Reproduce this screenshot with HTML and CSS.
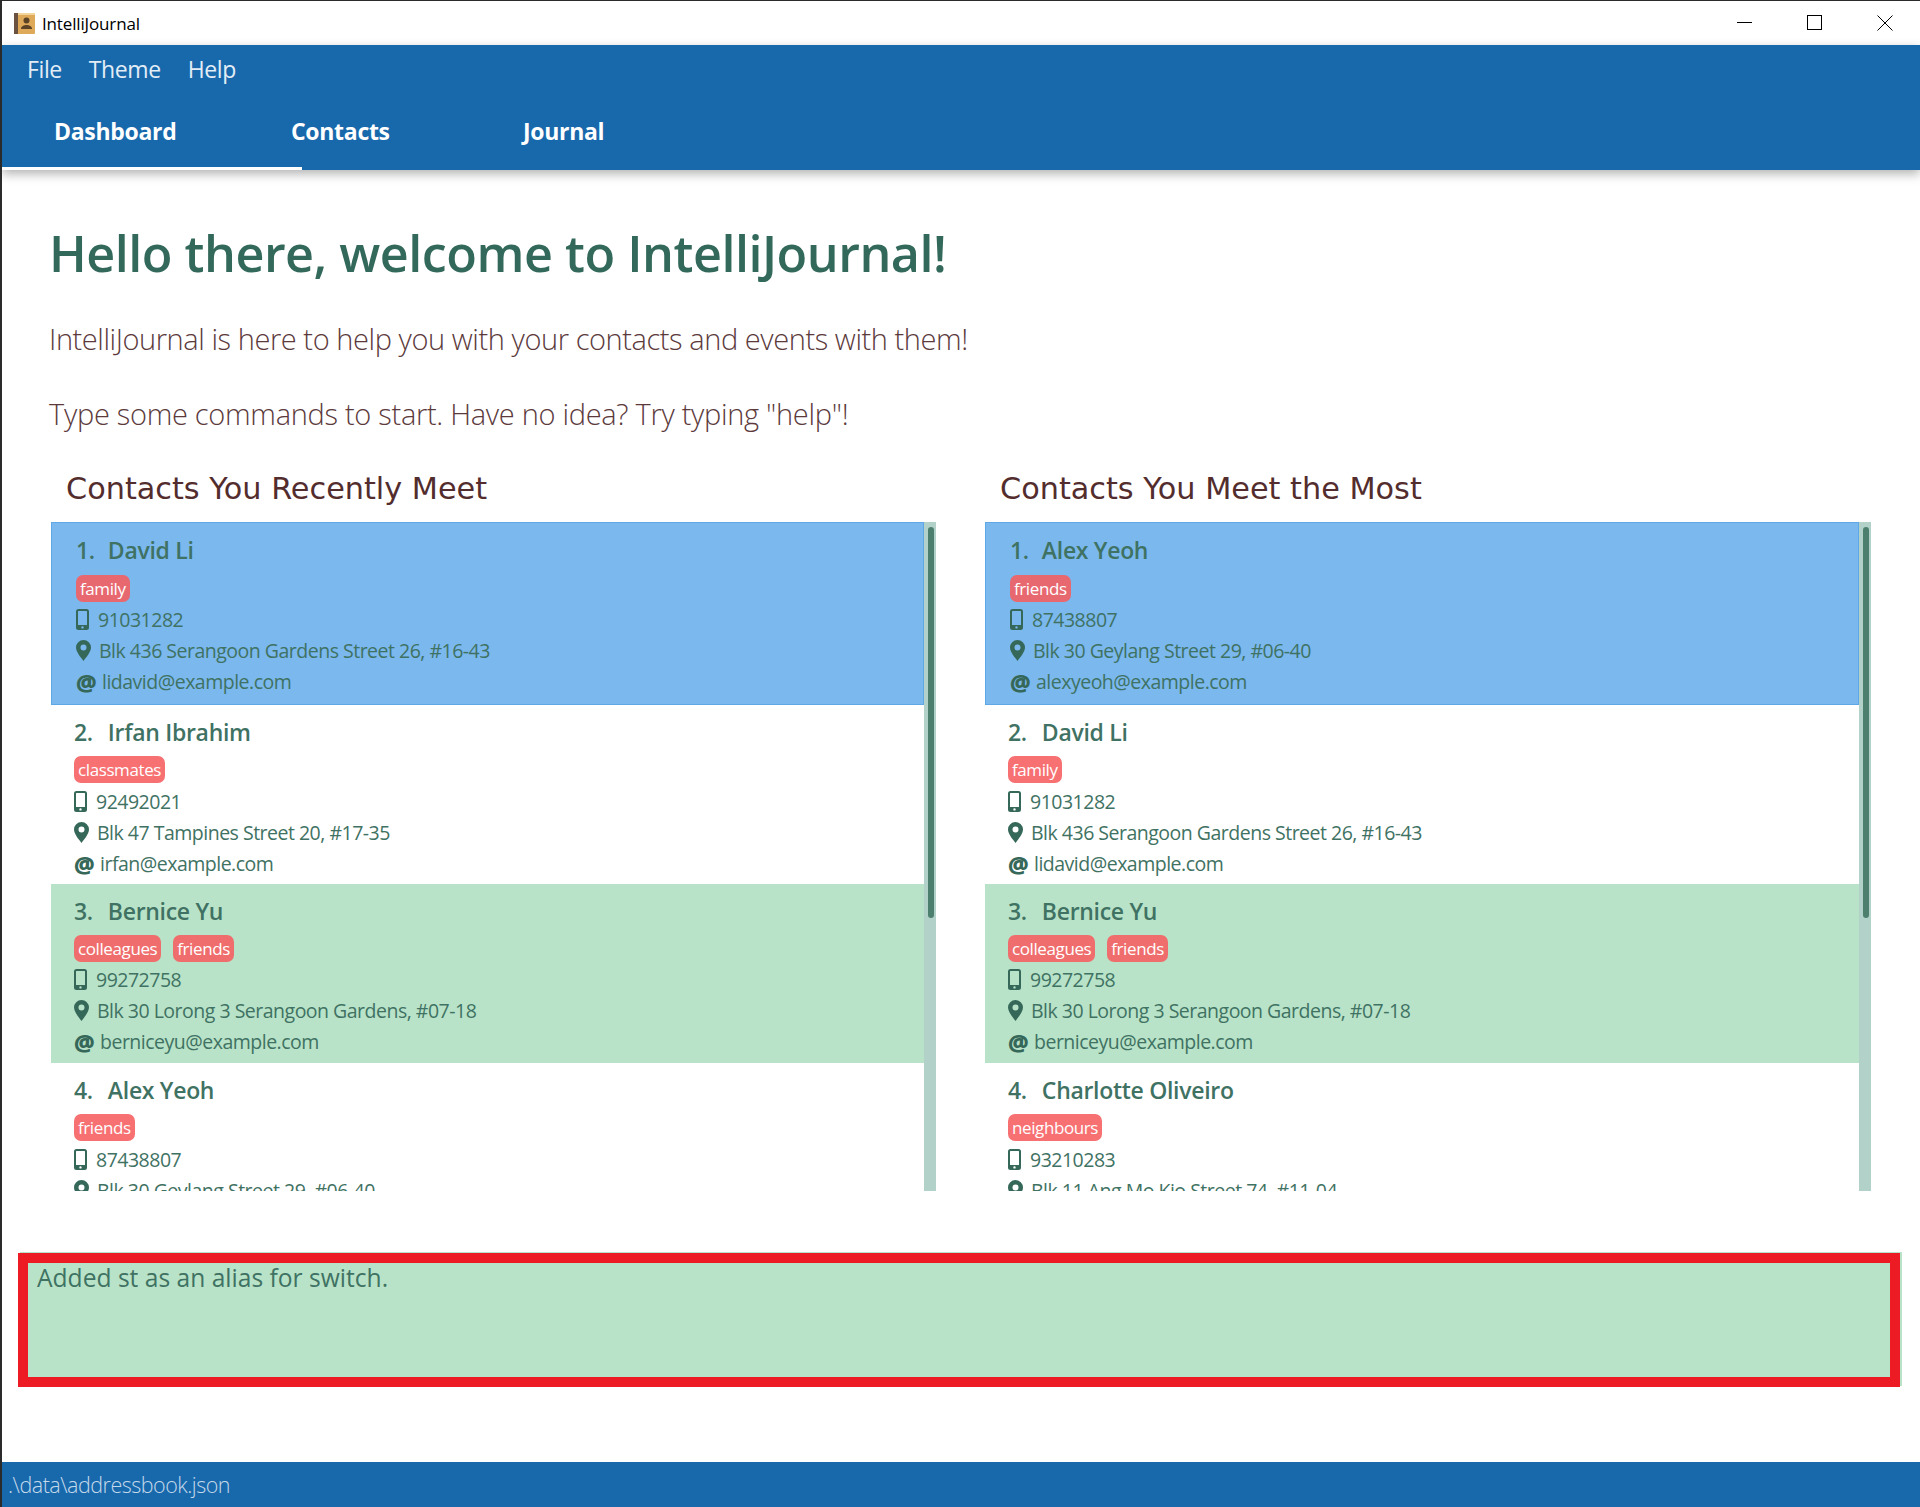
FILE: index.html
```html
<!DOCTYPE html>
<html lang="en">
<head>
  <meta charset="UTF-8" />
  <title>IntelliJournal</title>
  <link rel="stylesheet" href="styles.css">
</head>
<body>
  <svg class="icon-defs" width="0" height="0">
    <symbol id="phone" viewBox="0 0 13 21">
      <path fill-rule="evenodd" d="M2.500 0h8A2.500 2.500 0 0 1 13 2.500v16a2.500 2.500 0 0 1-2.500 2.500h-8A2.500 2.500 0 0 1 0 18.500v-16A2.500 2.500 0 0 1 2.500 0zM2 2.500v13.500h9V2.500a.5.5 0 0 0-.5-.5h-8a.5.5 0 0 0-.5.5zM6.500 17.200a1.200 1.200 0 1 0 0 2.400 1.200 1.200 0 0 0 0-2.400z"/>
    </symbol>
    <symbol id="pin" viewBox="0 0 15 21">
      <path fill-rule="evenodd" d="M7.500 0A7.500 7.500 0 0 0 0 7.500C0 12 5 17.500 7.500 21 10 17.500 15 12 15 7.500A7.500 7.500 0 0 0 7.500 0zm0 4.500a3 3 0 1 1 0 6 3 3 0 0 1 0-6z"/>
    </symbol>
  </svg>

  <header class="titlebar">
    <div class="app-name">
      <svg class="app-icon" width="21" height="21" viewBox="0 0 21 21">
        <rect x="0" y="0" width="21" height="21" rx="1" fill="#dfa95a"/>
        <rect x="0" y="0" width="4" height="21" fill="#6b5240"/>
        <rect x="4" y="0" width="17" height="2" fill="#f2d59a"/>
        <circle cx="12.500" cy="7.500" r="3" fill="#5c4326"/>
        <path d="M7 16c0-3 3-4 5.500-4s5.500 1 5.500 4z" fill="#5c4326"/>
      </svg>
      <span>IntelliJournal</span>
    </div>
    <div class="win-controls">
      <div class="win-btn">
        <svg width="16" height="16" viewBox="0 0 16 16"><path d="M0 7.500h15" stroke="#000" fill="none"/></svg>
      </div>
      <div class="win-btn">
        <svg width="16" height="16" viewBox="0 0 16 16"><rect x=".5" y=".5" width="14" height="14" stroke="#000" fill="none"/></svg>
      </div>
      <div class="win-btn">
        <svg width="16" height="16" viewBox="0 0 16 16"><path d="M.5.500l15 15M15.500.500l-15 15" stroke="#000" fill="none"/></svg>
      </div>
    </div>
  </header>

  <nav class="appbar">
    <div class="menu">
      <span>File</span>
      <span>Theme</span>
      <span>Help</span>
    </div>
    <div class="tabs">
      <div class="tab tab-dashboard active">Dashboard</div>
      <div class="tab tab-contacts">Contacts</div>
      <div class="tab">Journal</div>
    </div>
  </nav>

  <main class="content">
    <h1>Hello there, welcome to IntelliJournal!</h1>
    <p class="intro intro-first">IntelliJournal is here to help you with your contacts and events with them!</p>
    <p class="intro">Type some commands to start. Have no idea? Try typing "help"!</p>

    <div class="columns">
      <section>
        <h2>Contacts You Recently Meet</h2>
        <div class="list">
          <div class="cards">
            <article class="card selected">
              <div class="name"><span class="num">1.</span>David Li</div>
              <div class="tags"><span class="tag">family</span></div>
              <div class="row"><svg class="ico"><use href="#phone"/></svg>91031282</div>
              <div class="row"><svg class="ico ico-pin"><use href="#pin"/></svg>Blk 436 Serangoon Gardens Street 26, #16-43</div>
              <div class="row"><span class="at">@</span>lidavid@example.com</div>
            </article>
            <article class="card">
              <div class="name"><span class="num">2.</span>Irfan Ibrahim</div>
              <div class="tags"><span class="tag">classmates</span></div>
              <div class="row"><svg class="ico"><use href="#phone"/></svg>92492021</div>
              <div class="row"><svg class="ico ico-pin"><use href="#pin"/></svg>Blk 47 Tampines Street 20, #17-35</div>
              <div class="row"><span class="at">@</span>irfan@example.com</div>
            </article>
            <article class="card alt">
              <div class="name"><span class="num">3.</span>Bernice Yu</div>
              <div class="tags"><span class="tag">colleagues</span><span class="tag">friends</span></div>
              <div class="row"><svg class="ico"><use href="#phone"/></svg>99272758</div>
              <div class="row"><svg class="ico ico-pin"><use href="#pin"/></svg>Blk 30 Lorong 3 Serangoon Gardens, #07-18</div>
              <div class="row"><span class="at">@</span>berniceyu@example.com</div>
            </article>
            <article class="card">
              <div class="name"><span class="num">4.</span>Alex Yeoh</div>
              <div class="tags"><span class="tag">friends</span></div>
              <div class="row"><svg class="ico"><use href="#phone"/></svg>87438807</div>
              <div class="row"><svg class="ico ico-pin"><use href="#pin"/></svg>Blk 30 Geylang Street 29, #06-40</div>
            </article>
          </div>
          <div class="scrollbar"><div class="thumb"></div></div>
        </div>
      </section>

      <section>
        <h2>Contacts You Meet the Most</h2>
        <div class="list">
          <div class="cards">
            <article class="card selected">
              <div class="name"><span class="num">1.</span>Alex Yeoh</div>
              <div class="tags"><span class="tag">friends</span></div>
              <div class="row"><svg class="ico"><use href="#phone"/></svg>87438807</div>
              <div class="row"><svg class="ico ico-pin"><use href="#pin"/></svg>Blk 30 Geylang Street 29, #06-40</div>
              <div class="row"><span class="at">@</span>alexyeoh@example.com</div>
            </article>
            <article class="card">
              <div class="name"><span class="num">2.</span>David Li</div>
              <div class="tags"><span class="tag">family</span></div>
              <div class="row"><svg class="ico"><use href="#phone"/></svg>91031282</div>
              <div class="row"><svg class="ico ico-pin"><use href="#pin"/></svg>Blk 436 Serangoon Gardens Street 26, #16-43</div>
              <div class="row"><span class="at">@</span>lidavid@example.com</div>
            </article>
            <article class="card alt">
              <div class="name"><span class="num">3.</span>Bernice Yu</div>
              <div class="tags"><span class="tag">colleagues</span><span class="tag">friends</span></div>
              <div class="row"><svg class="ico"><use href="#phone"/></svg>99272758</div>
              <div class="row"><svg class="ico ico-pin"><use href="#pin"/></svg>Blk 30 Lorong 3 Serangoon Gardens, #07-18</div>
              <div class="row"><span class="at">@</span>berniceyu@example.com</div>
            </article>
            <article class="card">
              <div class="name"><span class="num">4.</span>Charlotte Oliveiro</div>
              <div class="tags"><span class="tag">neighbours</span></div>
              <div class="row"><svg class="ico"><use href="#phone"/></svg>93210283</div>
              <div class="row"><svg class="ico ico-pin"><use href="#pin"/></svg>Blk 11 Ang Mo Kio Street 74, #11-04</div>
            </article>
          </div>
          <div class="scrollbar"><div class="thumb"></div></div>
        </div>
      </section>
    </div>

    <div class="result">Added st as an alias for switch.</div>
  </main>

  <footer class="statusbar">.\data\addressbook.json</footer>
</body>
</html>
```

FILE: styles.css
```css
html, body {
  height: 100%;
}

body {
  margin: 0;
  display: flex;
  flex-direction: column;
  box-sizing: border-box;
  height: 1507px;
  overflow: hidden;
  border-left: 2px solid #2b2b2b;
  border-top: 1px solid #2b2b2b;
  background-color: #fff;
  font-family: 'Open Sans', sans-serif;
  color: #3f7263;
}

.icon-defs {
  position: absolute;
}

/* title bar */
.titlebar {
  height: 44px;
  flex: none;
  display: flex;
  justify-content: space-between;
  align-items: center;
  color: #000;
}

.app-name {
  display: flex;
  align-items: center;
  padding-left: 12px;
  font-size: 17px;
  letter-spacing: -0.15px;
}

.app-icon {
  margin-right: 7px;
}

.win-controls {
  display: flex;
}

.win-btn {
  width: 70px;
  height: 44px;
  display: flex;
  align-items: center;
  justify-content: center;
}

/* menu and tabs */
.appbar {
  height: 125px;
  flex: none;
  background-color: #1868ac;
  box-shadow: 0 4px 10px rgba(0,0,0,0.3);
  position: relative;
  color: #fff;
}

.menu {
  height: 48px;
  display: flex;
  align-items: center;
  gap: 27px;
  padding-left: 25px;
  font-size: 23px;
  letter-spacing: -0.4px;
  color: #e2edf6;
}

.tabs {
  display: flex;
  height: 77px;
  padding-top: 15px;
  box-sizing: border-box;
  font-size: 23px;
  font-weight: 700;
  letter-spacing: -0.3px;
}

.tab {
  position: relative;
  line-height: 46px;
}

.tab-dashboard {
  width: 237px;
  padding-left: 52px;
}

.tab-contacts {
  width: 232px;
}

.tab.active::after {
  content: '';
  position: absolute;
  left: 0;
  bottom: 0;
  width: 300px;
  height: 3px;
  background-color: #fff;
}

/* main area */
.content {
  flex: 1;
  min-height: 0;
  display: flex;
  flex-direction: column;
}

h1 {
  margin: 50px 0 0 47px;
  font-size: 50.300px;
  line-height: 66px;
  height: 81px;
  font-weight: 600;
  color: #33695a;
  letter-spacing: -0.5px;
}

.intro {
  margin: 0 0 0 47px;
  height: 75px;
  line-height: 75px;
  font-size: 29px;
  font-weight: 300;
  color: #5c3a3c;
  letter-spacing: -0.3px;
}

.intro-first {
  letter-spacing: -0.43px;
}

.columns {
  display: grid;
  grid-template-columns: 885px 886px;
  gap: 49px;
  margin: 1px 0 0 49px;
}

h2 {
  margin: 0;
  padding-left: 15px;
  height: 70px;
  line-height: 73px;
  font-family: 'DejaVu Sans', sans-serif;
  font-size: 30.300px;
  font-weight: 400;
  color: #532d2d;
}

.list {
  display: flex;
  height: 669px;
  overflow: hidden;
}

.cards {
  flex: 1;
}

.scrollbar {
  flex: none;
  width: 12px;
  box-sizing: border-box;
  background-color: #b2d1c8;
  padding: 5px 2px 0 4px;
}

.thumb {
  height: 391px;
  border-radius: 3px;
  background-color: #4d7f6f;
}

.card {
  height: 179px;
  box-sizing: border-box;
  padding: 10px 0 0 23px;
}

.card.selected {
  height: 183px;
  padding: 10px 0 0 24px;
  background-color: #7ab8ee;
  border: 1px solid #5ea8e8;
}

.card.alt {
  background-color: #b9e3c8;
}

.name {
  font-size: 23px;
  font-weight: 600;
  line-height: 34px;
  height: 34px;
  letter-spacing: -0.3px;
}

.num {
  margin-right: 15px;
}

.selected .num {
  margin-right: 13px;
}

.tags {
  display: flex;
  gap: 12px;
  margin-top: 7px;
  height: 27px;
}

.selected .tags {
  margin-top: 8px;
}

.tag {
  padding: 0 4px;
  border-radius: 7px;
  background-color: rgba(246,94,97,0.89);
  color: #fff;
  font-size: 17px;
  font-weight: 500;
  line-height: 27px;
  letter-spacing: -0.4px;
}

.row {
  display: flex;
  align-items: center;
  height: 31px;
  font-size: 19.500px;
  letter-spacing: -0.5px;
  white-space: nowrap;
}

.tags + .row {
  margin-top: 3px;
}

.alt .tags + .row,
.selected .tags + .row {
  margin-top: 2px;
}

.ico {
  width: 13px;
  height: 21px;
  margin-right: 9px;
  fill: #36685a;
  flex: none;
}

.ico-pin {
  width: 15px;
  margin-right: 8px;
}

.at {
  font-size: 23px;
  font-weight: 800;
  color: #36685a;
  width: 17px;
  margin-right: 9px;
  letter-spacing: 0;
}

/* command result */
.result {
  margin: 62px 0 0 16px;
  width: 1882px;
  height: 134px;
  box-sizing: border-box;
  border: 10px solid #ed1c24;
  background-color: #b9e3c8;
  box-shadow: 2px -1px 0 #b9e3c8;
  padding: 0 0 0 9px;
  font-size: 24.600px;
  line-height: 30px;
  color: #3f7263;
}

/* status bar */
.statusbar {
  height: 45px;
  flex: none;
  background-color: #1868ac;
  color: #c4d9ea;
  font-size: 21.500px;
  font-weight: 300;
  line-height: 45px;
  padding-left: 6px;
  letter-spacing: -0.5px;
}
```
